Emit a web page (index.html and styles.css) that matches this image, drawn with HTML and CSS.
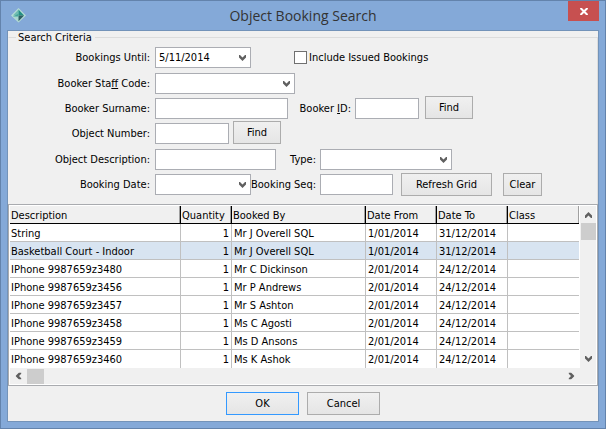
FILE: index.html
```html
<!DOCTYPE html>
<html lang="en">
  <head>
    <meta charset="UTF-8" />
    <meta name="viewport" content="width=device-width, initial-scale=1.0" />
    <title>Object Booking Search</title>
    <link rel="stylesheet" href="styles.css">
  </head>

  <body>
    <svg class="symbols" aria-hidden="true">
      <symbol id="arrow-down" viewBox="0 0 7 6">
        <path d="M0 0 L1 0 L3.500 2.500 L6 0 L7 0 L7 2.500 L3.500 6 L0 2.500 Z" />
      </symbol>
    </svg>

    <div class="window">
      <header class="title-bar">
        <svg class="app-icon" viewBox="0 0 16 16" aria-hidden="true">
          <path d="M8 0 L16 8 L8 15.500 L0 8 Z" fill="#b5dcd5" />
          <path d="M8 1.500 L8 8 L2 8 Z" fill="#6fbcb2" />
          <path d="M8 1.500 L14 8 L8 8 Z" fill="#249084" />
          <path d="M2 8.500 L8 8 L8 14 Z" fill="#a9d8d0" />
          <path d="M8 8 L14 8 L8 14 Z" fill="#2e5f62" />
          <path d="M2 9 L8 6 L8 9 Z" fill="#45a59a" />
        </svg>
        <h1>Object Booking Search</h1>
        <button class="close" type="button" aria-label="Close">
          <svg viewBox="0 0 8 7" aria-hidden="true">
            <path d="M0.500 0 L7.500 7 M7.500 0 L0.500 7" />
          </svg>
        </button>
      </header>

      <form class="client">
        <fieldset class="criteria">
          <legend>Search Criteria</legend>

          <div class="row tall">
            <label class="main-label" for="until">Bookings Until:</label>
            <span class="combo date">
              <select id="until"><option>5/11/2014</option></select>
              <svg><use href="#arrow-down" /></svg>
            </span>
            <label class="check"><input type="checkbox" />Include Issued Bookings</label>
          </div>

          <div class="row">
            <label class="main-label" for="staff">Booker Sta<u>f</u>f Code:</label>
            <span class="combo staff">
              <select id="staff"><option></option></select>
              <svg><use href="#arrow-down" /></svg>
            </span>
          </div>

          <div class="row">
            <label class="main-label" for="surname">Booker Surname:</label>
            <input class="surname" id="surname" type="text" />
            <label class="side-label id-label" for="booker-id">Booker <u>I</u>D:</label>
            <input class="booker-id" id="booker-id" type="text" />
            <button class="find spaced" type="button">Find</button>
          </div>

          <div class="row tall">
            <label class="main-label" for="number">Object Number:</label>
            <input class="number" id="number" type="text" />
            <button class="find" type="button">Find</button>
          </div>

          <div class="row">
            <label class="main-label" for="desc">Object Description:</label>
            <input class="desc" id="desc" type="text" />
            <label class="side-label type-label" for="type">Type:</label>
            <span class="combo type">
              <select id="type"><option></option></select>
              <svg><use href="#arrow-down" /></svg>
            </span>
          </div>

          <div class="row">
            <label class="main-label" for="date">Booking Date:</label>
            <span class="combo date">
              <select id="date"><option></option></select>
              <svg><use href="#arrow-down" /></svg>
            </span>
            <label class="side-label seq-label" for="seq">Booking Seq:</label>
            <input class="seq" id="seq" type="text" />
            <button class="refresh" type="button">Refresh Grid</button>
            <button class="clear" type="reset">Clear</button>
          </div>
        </fieldset>

        <div class="grid">
          <div class="grid-body">
            <table>
              <colgroup>
                <col class="c-desc" />
                <col class="c-qty" />
                <col class="c-by" />
                <col class="c-date" />
                <col class="c-date" />
                <col />
              </colgroup>
              <thead>
                <tr>
                  <th>Description</th>
                  <th>Quantity</th>
                  <th>Booked By</th>
                  <th>Date From</th>
                  <th>Date To</th>
                  <th>Class</th>
                </tr>
              </thead>
              <tbody>
                <tr><td>String</td><td class="num">1</td><td>Mr J Overell SQL</td><td>1/01/2014</td><td>31/12/2014</td><td></td></tr>
                <tr class="selected"><td>Basketball Court - Indoor</td><td class="num">1</td><td>Mr J Overell SQL</td><td>1/01/2014</td><td>31/12/2014</td><td></td></tr>
                <tr><td>IPhone 9987659z3480</td><td class="num">1</td><td>Mr C Dickinson</td><td>2/01/2014</td><td>24/12/2014</td><td></td></tr>
                <tr><td>IPhone 9987659z3456</td><td class="num">1</td><td>Mr P Andrews</td><td>2/01/2014</td><td>24/12/2014</td><td></td></tr>
                <tr><td>IPhone 9987659z3457</td><td class="num">1</td><td>Mr S Ashton</td><td>2/01/2014</td><td>24/12/2014</td><td></td></tr>
                <tr><td>IPhone 9987659z3458</td><td class="num">1</td><td>Ms C Agosti</td><td>2/01/2014</td><td>24/12/2014</td><td></td></tr>
                <tr><td>IPhone 9987659z3459</td><td class="num">1</td><td>Ms D Ansons</td><td>2/01/2014</td><td>24/12/2014</td><td></td></tr>
                <tr><td>IPhone 9987659z3460</td><td class="num">1</td><td>Ms K Ashok</td><td>2/01/2014</td><td>24/12/2014</td><td></td></tr>
              </tbody>
            </table>
            <div class="scroll vertical">
              <svg class="up"><use href="#arrow-down" /></svg>
              <div class="thumb"></div>
              <svg class="down"><use href="#arrow-down" /></svg>
            </div>
          </div>
          <div class="scroll horizontal">
            <svg class="left"><use href="#arrow-down" /></svg>
            <div class="thumb"></div>
            <svg class="right"><use href="#arrow-down" /></svg>
          </div>
        </div>

        <div class="actions">
          <button class="ok" type="submit">OK</button>
          <button type="button">Cancel</button>
        </div>
      </form>
    </div>
  </body>
</html>
```

FILE: styles.css
```css
* {
  box-sizing: border-box;
}

body {
  margin: 0;
  font-family: Tahoma, "DejaVu Sans Condensed", "DejaVu Sans", sans-serif;
  font-size: 11px;
  color: #000;
}

.symbols {
  display: none;
}

/* Window frame */
.window {
  display: flex;
  flex-direction: column;
  min-height: 100vh;
  padding: 0 6px 6px;
  background: #84a9d8;
  border: 1px solid #6383ac;
}

.title-bar {
  display: flex;
  justify-content: space-between;
  align-items: flex-start;
  height: 29px;
}

.app-icon {
  width: 15px;
  height: 15px;
  margin: 7px 12px 0 4px;
}

.title-bar h1 {
  margin: 0;
  font-family: "Segoe UI", "Open Sans", sans-serif;
  font-size: 14px;
  font-weight: normal;
  line-height: 30px;
  color: #333;
}

.close {
  display: flex;
  justify-content: center;
  align-items: center;
  width: 31px;
  height: 20px;
  padding: 0;
  background: #c75050;
  border: none;
}

.close svg {
  width: 8px;
  height: 7px;
  stroke: #fff;
  stroke-width: 2;
}

.client {
  flex: 1;
  background: #f0f0f0;
  border: 1px solid #7393b9;
}

/* Search criteria */
.criteria {
  min-width: 0;
  margin: 0;
  padding: 3px 0 9px;
  border: 1px solid #dcdcdc;
  border-left-color: #f0f0f0;
  border-bottom: none;
}

.criteria legend {
  height: 13px;
  margin-left: 7px;
  padding: 0 3px 0 2px;
  line-height: 14px;
}

.row {
  display: flex;
  align-items: flex-end;
  height: 21px;
  margin-bottom: 4px;
}

.row.tall {
  margin-bottom: 5px;
}

.row:last-child {
  align-items: center;
  margin-bottom: 0;
}

label {
  line-height: 21px;
  white-space: nowrap;
}

.main-label {
  width: 146px;
  padding-right: 5px;
  text-align: right;
}

.side-label {
  padding-right: 4px;
  text-align: right;
}

.id-label {
  width: 67px;
}

.type-label {
  width: 44px;
}

.seq-label {
  width: 69px;
}

input[type="text"],
select {
  height: 21px;
  margin: 0;
  padding: 0 4px;
  font: inherit;
  color: #000;
  background: #fff;
  border: 1px solid #abadb3;
  border-radius: 0;
}

.combo {
  position: relative;
  height: 21px;
}

.combo select {
  display: block;
  width: 100%;
  padding: 0 3px;
  appearance: none;
}

.combo svg {
  position: absolute;
  right: 5px;
  top: 8px;
  pointer-events: none;
}

.combo svg,
.scroll svg {
  width: 7px;
  height: 6px;
  fill: #606060;
}

.date {
  width: 96px;
}

.staff {
  width: 140px;
}

.surname {
  width: 133px;
}

.booker-id {
  width: 64px;
}

.number {
  width: 74px;
}

.desc {
  width: 121px;
}

.type {
  width: 132px;
}

.seq {
  width: 73px;
}

.check {
  display: flex;
  align-items: center;
  margin-left: 43px;
}

.check input {
  width: 13px;
  height: 13px;
  margin: 0 2px 0 0;
  appearance: none;
  background: #fff;
  border: 1px solid #707070;
}

.check input:checked {
  background: #606060;
}

/* Buttons */
.row button,
.actions button {
  height: 23px;
  padding: 0;
  font: inherit;
  color: #000;
  background: linear-gradient(#f0f0f0, #e5e5e5);
  border: 1px solid #acacac;
}

.find {
  width: 48px;
  margin-left: 4px;
}

.find.spaced {
  margin-left: 6px;
}

.refresh {
  width: 91px;
  margin-left: 8px;
}

.clear {
  width: 39px;
  margin-left: 11px;
}

/* Results grid */
.grid {
  padding: 1px;
  background: #fff;
  border: 1px solid #a9abaf;
}

.grid-body {
  display: flex;
  gap: 1px;
}

table {
  flex: 1;
  table-layout: fixed;
  width: 100%;
  border-spacing: 0;
}

.c-desc {
  width: 171px;
}

.c-qty {
  width: 51px;
}

.c-by {
  width: 134px;
}

.c-date {
  width: 71px;
}

th,
td {
  height: 18px;
  padding: 2px 2px 0 1px;
  line-height: 15px;
  text-align: left;
  vertical-align: top;
  white-space: nowrap;
  overflow: hidden;
  border-right: 1px solid #c0c0c0;
  border-bottom: 1px solid #c0c0c0;
}

th {
  font-weight: normal;
  background: #f0f0f0;
  border-right-color: #000;
  border-bottom-color: #000;
  box-shadow: inset -1px 0 #a0a0a0;
}

td + td {
  padding-left: 2px;
}

td.num {
  text-align: right;
}

th:last-child,
td:last-child {
  border-right: none;
}

tbody tr:last-child td {
  border-bottom: none;
}

.selected td {
  background: #d8e4f1;
}

/* Scroll bars */
.scroll {
  display: flex;
  align-items: center;
  background: #f0f0f0;
}

.scroll .thumb {
  background: #cdcdcd;
}

.vertical {
  flex-direction: column;
  width: 16px;
  padding: 6px 0;
}

.vertical .thumb {
  width: 15px;
  height: 17px;
  margin-top: 5px;
}

.horizontal {
  height: 16px;
  padding: 0 21px 0 5px;
}

.horizontal .thumb {
  width: 17px;
  height: 15px;
  margin-left: 5px;
}

.up {
  transform: rotate(180deg);
}

.left {
  transform: rotate(90deg);
}

.right {
  margin-left: auto;
  transform: rotate(-90deg);
}

.down {
  margin-top: auto;
}

/* Dialog buttons */
.actions {
  display: flex;
  justify-content: center;
  gap: 8px;
  padding: 6px 0;
}

.actions button {
  width: 73px;
}

.actions .ok {
  border-color: #3399ff;
}
```
